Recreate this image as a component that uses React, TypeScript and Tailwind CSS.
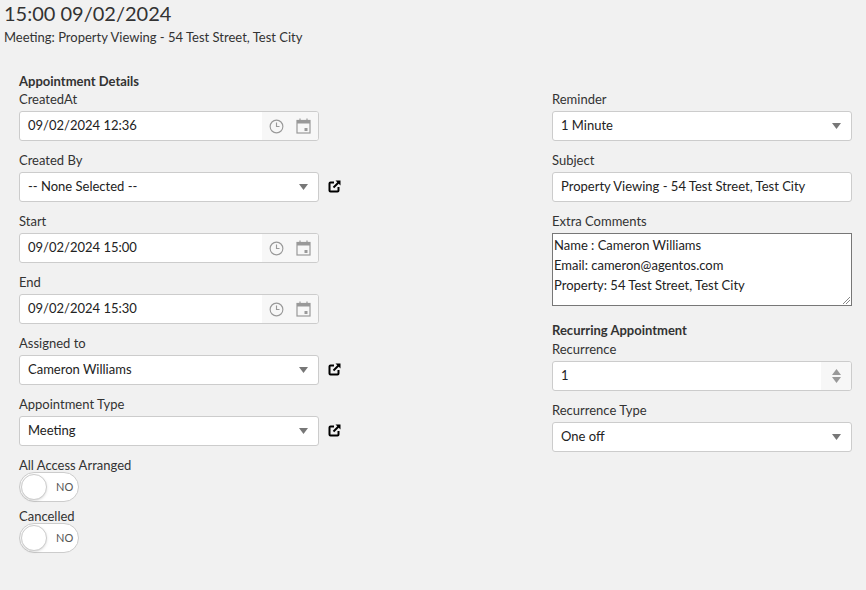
import React from "react";

const font = { fontFamily: "Lato, 'Open Sans', sans-serif" };

const Clock = () => (
  <svg width="15" height="15" viewBox="0 0 16 16" fill="none" stroke="#999" strokeWidth="1.2">
    <circle cx="8" cy="8" r="6.8" />
    <path d="M8 3.8V8h3.2" />
  </svg>
);
const Cal = () => (
  <svg width="15" height="16" viewBox="0 0 15 16" fill="none">
    <rect x="1" y="2.5" width="13" height="12.5" stroke="#999" strokeWidth="1.2" />
    <rect x="1" y="2.5" width="13" height="3" fill="#999" />
    <path d="M4 0.5v3M11 0.5v3" stroke="#999" strokeWidth="1.2" />
    <rect x="8.5" y="10" width="3" height="3" fill="#999" />
  </svg>
);
const Ext = () => (
  <svg width="13" height="13" viewBox="0 0 13 13" fill="none">
    <path d="M6 2.5H2.5a1 1 0 0 0-1 1v7a1 1 0 0 0 1 1h7a1 1 0 0 0 1-1V7" stroke="#000" strokeWidth="2" />
    <path d="M7.5 0.5H12.5V5.5Z" fill="#000" />
    <path d="M5.5 7.5L11 2" stroke="#000" strokeWidth="2" />
  </svg>
);
const Caret = () => (
  <svg width="9" height="6" viewBox="0 0 9 6"><path d="M0 0h9L4.5 6z" fill="#777" /></svg>
);

const Label = ({ t, bold }: { t: string; bold?: boolean }) => (
  <div className={`h-[18px] leading-[18px] text-[13px] text-[#333] ${bold ? "font-bold" : ""}`}>{t}</div>
);

const DateField = ({ label, value }: { label: string; value: string }) => (
  <div className="mb-[10px]">
    <Label t={label} />
    <div className="mt-[3px] w-[300px] h-[30px] bg-white border border-[#ccc] rounded-[3px] flex items-center overflow-hidden">
      <div className="flex-1 pl-[8px] text-[13px] text-[#222]">{value}</div>
      <div className="h-full w-[56px] bg-[#f7f7f7] flex items-center justify-center gap-[12px]">
        <Clock />
        <Cal />
      </div>
    </div>
  </div>
);

const Select = ({ label, value, ext, w = 300 }: { label: string; value: string; ext?: boolean; w?: number }) => (
  <div className="mb-[10px]">
    <Label t={label} />
    <div className="mt-[3px] flex items-center">
      <div className="h-[30px] bg-white border border-[#ccc] rounded-[3px] flex items-center pl-[8px] pr-[10px]" style={{ width: w }}>
        <div className="flex-1 text-[13px] text-[#222]">{value}</div>
        <Caret />
      </div>
      {ext && <div className="ml-[9px] mt-[-2px]"><Ext /></div>}
    </div>
  </div>
);

const Toggle = ({ label }: { label: string }) => (
  <div className="mb-[5px]">
    <Label t={label} />
    <div className="mt-[-2px] w-[60px] h-[30px] rounded-full border border-[#ccc] bg-white flex items-center relative">
      <div className="w-[26px] h-[26px] rounded-full border border-[#ccc] bg-white ml-[1px] shadow-sm" />
      <div className="ml-[9px] text-[11px] text-[#555]">NO</div>
    </div>
  </div>
);

export default function App() {
  return (
    <div className="w-[866px] h-[590px] bg-[#f1f1f1] overflow-hidden" style={font}>
      <div className="pl-[4px] pt-[1px]">
        <div className="text-[20px] leading-[24px] text-[#333]">15:00 09/02/2024</div>
        <div className="text-[13px] leading-[18px] mt-[3px] text-[#333]">Meeting: Property Viewing - 54 Test Street, Test City</div>
      </div>
      <div className="flex pl-[19px] mt-[26px]">
        <div className="w-[533px]">
          <Label t="Appointment Details" bold />
          <DateField label="CreatedAt" value="09/02/2024 12:36" />
          <Select label="Created By" value="-- None Selected --" ext />
          <DateField label="Start" value="09/02/2024 15:00" />
          <DateField label="End" value="09/02/2024 15:30" />
          <Select label="Assigned to" value="Cameron Williams" ext />
          <Select label="Appointment Type" value="Meeting" ext />
          <Toggle label="All Access Arranged" />
          <Toggle label="Cancelled" />
        </div>
        <div className="w-[300px] pt-[18px]">
          <Select label="Reminder" value="1 Minute" />
          <div className="mb-[10px]">
            <Label t="Subject" />
            <div className="mt-[3px] h-[30px] bg-white border border-[#ccc] rounded-[3px] flex items-center pl-[8px] text-[13px] text-[#222]">
              Property Viewing - 54 Test Street, Test City
            </div>
          </div>
          <div>
            <Label t="Extra Comments" />
            <div className="mt-[3px] h-[73px] bg-white border border-[#777] pl-[1px] pt-[1px] text-[13px] leading-[20px] text-[#222] relative">
              <div>Name : Cameron Williams</div>
              <div>Email: cameron@agentos.com</div>
              <div>Property: 54 Test Street, Test City</div>
              <svg className="absolute right-[1px] bottom-[1px]" width="8" height="8" viewBox="0 0 8 8" stroke="#888" strokeWidth="1"><path d="M1 8L8 1M4 8L8 4" /></svg>
            </div>
          </div>
          <div className="mt-[15px]"><Label t="Recurring Appointment" bold /></div>
          <div className="mb-[10px] mt-[1px]">
            <Label t="Recurrence" />
            <div className="mt-[3px] h-[30px] bg-white border border-[#ccc] rounded-[3px] flex items-center overflow-hidden">
              <div className="flex-1 pl-[8px] text-[13px] text-[#222]">1</div>
              <div className="h-full w-[30px] bg-[#f7f7f7] flex flex-col items-center justify-center gap-[2px]">
                <svg width="9" height="6" viewBox="0 0 9 6"><path d="M0 6h9L4.5 0z" fill="#999" /></svg>
                <svg width="9" height="6" viewBox="0 0 9 6"><path d="M0 0h9L4.5 6z" fill="#999" /></svg>
              </div>
            </div>
          </div>
          <Select label="Recurrence Type" value="One off" />
        </div>
      </div>
    </div>
  );
}
